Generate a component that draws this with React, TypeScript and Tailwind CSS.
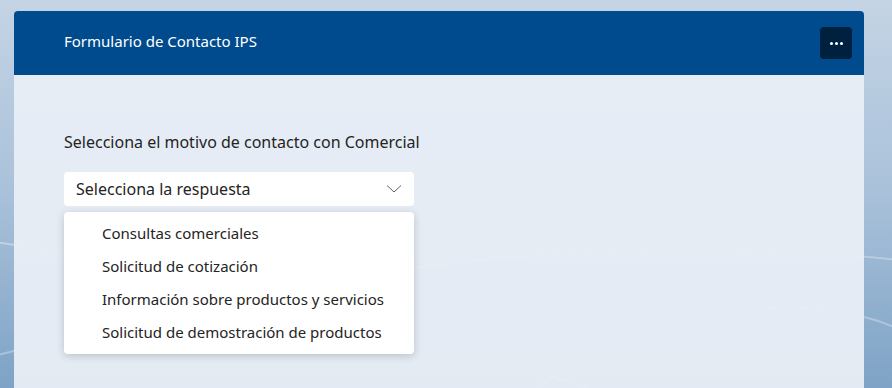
import { useState } from "react";

const OPTIONS = [
  "Consultas comerciales",
  "Solicitud de cotización",
  "Información sobre productos y servicios",
  "Solicitud de demostración de productos",
];

function Backdrop() {
  return (
    <svg className="absolute inset-0 h-full w-full" viewBox="0 0 892 388" preserveAspectRatio="none">
      <path d="M-20 240 C 200 270, 420 330, 620 400" fill="none" stroke="#ffffff" strokeOpacity="0.35" strokeWidth="2" />
      <path d="M-20 360 C 200 300, 520 220, 900 260" fill="none" stroke="#ffffff" strokeOpacity="0.3" strokeWidth="2" />
      <path d="M520 400 C 650 300, 820 290, 900 330" fill="none" stroke="#ffffff" strokeOpacity="0.3" strokeWidth="2" />
    </svg>
  );
}

export default function App() {
  const [open] = useState(true);

  return (
    <div
      className="relative h-[388px] w-[892px] overflow-hidden bg-gradient-to-b from-[#c4d4e4] via-[#a9c1da] to-[#7ea3c6] text-[#242424]"
      style={{ fontFamily: '"Segoe UI", "Noto Sans", "Open Sans", sans-serif' }}
    >
      <Backdrop />
      <div className="relative ml-[14px] mt-[11px] w-[850px] overflow-hidden rounded-t-[4px]">
        <header className="flex h-[64px] items-center justify-between bg-[#004b8d] pl-[50px] pr-[12px]">
          <h1 className="pb-[4px] text-[15px] text-white">Formulario de Contacto IPS</h1>
          <button
            type="button"
            className="flex h-[32px] w-[32px] items-center justify-center gap-[2px] rounded-[4px] bg-[#00203f]"
          >
            <span className="h-[3px] w-[3px] rounded-full bg-white" />
            <span className="h-[3px] w-[3px] rounded-full bg-white" />
            <span className="h-[3px] w-[3px] rounded-full bg-white" />
          </button>
        </header>

        <main className="h-[330px] bg-[#e9eef6]/95 px-[50px] pt-[56px]">
          <p className="text-[16px] leading-[22px]">Selecciona el motivo de contacto con Comercial</p>

          <div className="relative mt-[19px] w-[350px]">
            <div className="flex h-[34px] items-center justify-between rounded-[4px] bg-white pl-[12px] pr-[12px] text-[16px]">
              <span className="pb-[1px]">Selecciona la respuesta</span>
              <svg width="16" height="10" viewBox="0 0 16 10" fill="none">
                <path d="M1 1.5 L8 8 L15 1.5" stroke="#616161" strokeWidth="1" />
              </svg>
            </div>

            {open && (
              <ul className="absolute left-0 top-[40px] w-[350px] rounded-[4px] bg-white py-[5px] shadow-[0_2px_8px_rgba(0,0,0,0.18)]">
                {OPTIONS.map((option) => (
                  <li key={option} className="flex h-[33px] items-center pl-[38px] text-[15px]">
                    {option}
                  </li>
                ))}
              </ul>
            )}
          </div>
        </main>
      </div>
    </div>
  );
}
